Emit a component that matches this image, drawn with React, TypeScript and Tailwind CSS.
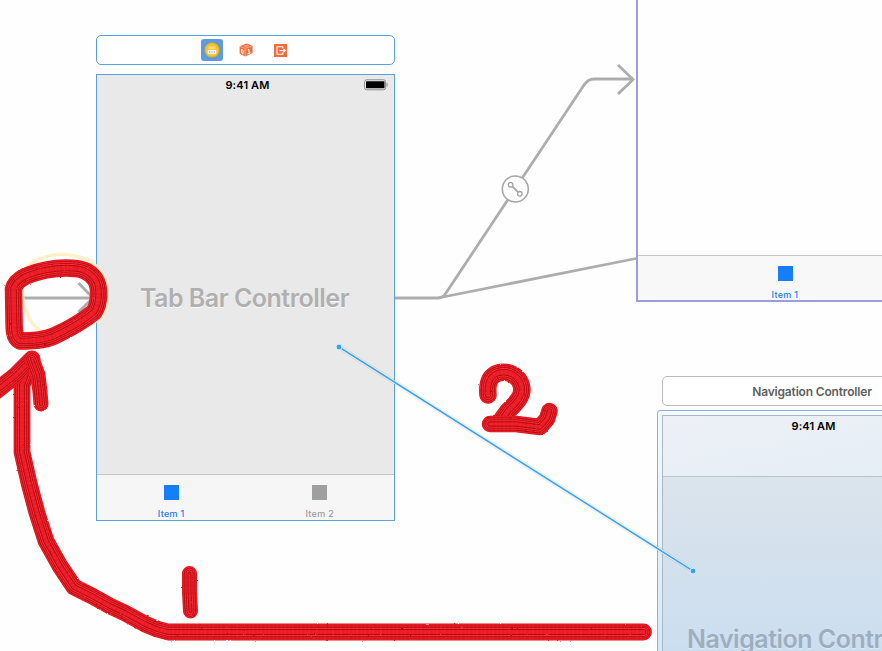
import React from "react";

const LOOP =
  "M14 318 L13.5 289 C14.5 284 18 280 26 276 C36 272 50 268 66 268 C82 268 89 271 95 279 C100 286 100 303 94 312 L86 318 C79 323 67 330 54 336 C43 341 30 341 20 341 C14 338 14 330 14 318 Z";

type BrushProps = { d: string; width?: number };

// A bristle brush: nested strokes along one path leave parallel light and dark streaks.
function Brush({ d, width = 17 }: BrushProps) {
  const bristles = [
    { w: width, c: "#e0141d" },
    { w: width - 1.4, c: "#ee222b" },
    { w: width - 3.6, c: "#b90610" },
    { w: width - 5.2, c: "#f22a33" },
    { w: width - 7.4, c: "#bb0711" },
    { w: width - 9, c: "#f4343e" },
    { w: width - 11, c: "#b80710" },
    { w: width - 12.8, c: "#ee2029" },
  ];
  return (
    <g fill="none" strokeLinejoin="round" strokeLinecap="round">
      {bristles.map((b, i) => (
        <path key={i} d={d} stroke={b.c} strokeWidth={Math.max(b.w, 0.8)} />
      ))}
      <path d={d} stroke="#b0000a" strokeOpacity=".1" strokeWidth={width - 2} strokeDasharray="1 2 2 3" strokeLinecap="butt" />
    </g>
  );
}

function TabItem({ label, active }: { label: string; active?: boolean }) {
  return (
    <div className="flex flex-1 flex-col items-center pt-[10px]">
      <div className={active ? "size-[15px] shrink-0 bg-[#147efb]" : "size-[15px] shrink-0 bg-[#9f9f9f]"} />
      <span className={`mt-[8px] text-[9px] leading-[12px] tracking-[0.3px] font-medium ${active ? "text-[#147efb]" : "text-[#9b9b9b]"}`}>
        {label}
      </span>
    </div>
  );
}

function SceneDock() {
  return (
    <div className="absolute left-[96px] top-[35px] flex h-[30px] w-[299px] items-center rounded-[5px] border border-[#5c9ede] bg-white pl-[104px]">
      <div className="flex size-[22px] items-center justify-center rounded-[3px] bg-[#5c9cdc]">
        <svg width="16" height="16" viewBox="0 0 16 16">
          <circle cx="8" cy="8" r="7.5" fill="#f6b11d" />
          <circle cx="8" cy="8" r="6.2" fill="#fbc834" />
          <rect x="4" y="3.8" width="8" height="4" rx=".6" fill="#fddc70" stroke="#f0ad18" strokeWidth=".6" />
          <rect x="3.8" y="8" width="8.4" height="3.8" rx=".5" fill="#fff" />
          <path d="M5 10h1.2M7.4 10h1.2M9.8 10h1.2" stroke="#5280a0" strokeWidth="1.1" />
        </svg>
      </div>
      <svg className="ml-[16px]" width="14" height="14" viewBox="0 0 14 14">
        <path d="M.6 3.2 7.5 .5 13.5 2.8V10L6.3 13.6.6 10.8Z" fill="#f46b3b" />
        <path d="M.7 3.6 6.2 5.3 13.4 3M6.2 5.3V13.5" fill="none" stroke="#fff" strokeOpacity=".75" strokeWidth=".6" />
        <path d="m4 2.9 3.5-1.2 3 1.1-3.6 1.2Z" fill="#f9a283" />
        <path d="M2.4 6.5v3.4l1.8.6V7.2ZM8.7 7l1.3-.6v4.2M8.5 11.1l2.9-1.2" fill="none" stroke="#fff" strokeWidth="1" />
      </svg>
      <svg className="ml-[21px]" width="13" height="13" viewBox="0 0 13 13">
        <rect width="13" height="13" fill="#f46b3b" />
        <path d="M8.8 4.4V2.8H3v7.5h5.8V8.6M5.5 6.6H11M9.4 4.8l1.9 1.8-1.9 1.8" fill="none" stroke="#fff" strokeWidth="1.1" />
      </svg>
    </div>
  );
}

function Battery() {
  return (
    <svg className="absolute right-[6px] top-[4px]" width="24" height="12" viewBox="0 0 24 12">
      <rect x=".6" y=".8" width="21" height="10" rx="2" fill="#f2f2f2" stroke="#8b8b8b" />
      <rect x="2" y="2.3" width="18.5" height="7" rx=".5" fill="#000" />
      <path d="M23 4v3.6" stroke="#999" strokeWidth="1.2" />
    </svg>
  );
}

export default function App() {
  return (
    <div className="relative h-[651px] w-[882px] overflow-hidden bg-[#fefefe] font-['Inter','Liberation_Sans',sans-serif]">
      <SceneDock />

      <section className="absolute left-[96px] top-[74px] flex h-[447px] w-[299px] flex-col border border-[#5c9ede] bg-[#e9e9e9]">
        <div className="relative h-[20px] text-center text-[11px] leading-[20px] font-semibold tracking-[0.15px] pl-[4px] text-black">
          9:41 AM
          <Battery />
        </div>
        <div className="flex flex-1 justify-center pt-[187px] pr-[2px]">
          <h1 className="whitespace-nowrap text-[25px] leading-[32px] font-semibold tracking-[-0.5px] text-[#b0b0b0] [text-shadow:0_1px_0_#f8f8f8]">
            Tab Bar Controller
          </h1>
        </div>
        <div className="flex h-[46px] border-t border-[#c5c5c5] bg-[#f6f6f6]">
          <TabItem label="Item 1" active />
          <TabItem label="Item 2" />
        </div>
      </section>

      <section className="absolute left-[636px] top-[-10px] flex h-[312px] w-[298px] flex-col justify-end border-2 border-[#9c9de0] bg-[#fefefe]">
        <div className="flex h-[45px] border-t border-[#c8c8c8] bg-[#f8f8f8]">
          <TabItem label="Item 1" active />
        </div>
      </section>

      <div className="absolute left-[662px] top-[376px] h-[30px] w-[300px] rounded-[5px] border border-[#bbb] bg-white text-center text-[12px] leading-[29px] font-semibold tracking-[-0.17px] text-[#606060]">
        Navigation Controller
      </div>
      <section className="absolute left-[657px] top-[410px] h-[520px] w-[310px] rounded-t-[3px] border border-[#8daee0] bg-gradient-to-b from-[#f5f9fc] to-[#d5e8f8] to-[240px] p-[4px]">
        <div className="h-full border border-[#a9b8c5] bg-gradient-to-b from-[#dbe4eb] from-[60px] to-[#cbdef0] to-[236px]">
          <div className="h-[61px] border-b border-[#b9c5ce] bg-gradient-to-br from-[#edf1f6] to-[#e4edf6] text-center text-[11px] leading-[20px] font-semibold tracking-[0.1px] pl-[3px] text-black">
            9:41 AM
          </div>
          <h2 className="pt-[146px] pl-[24px] whitespace-nowrap text-[25px] leading-[32px] font-semibold tracking-[-0.5px] text-[#9dafbf] [text-shadow:0_1px_0_#dfebf5]">
            Navigation Controller
          </h2>
        </div>
      </section>

      <svg className="pointer-events-none absolute inset-0" width="882" height="651" viewBox="0 0 882 651">
        <defs>
          <filter id="bristle" filterUnits="userSpaceOnUse" x="0" y="0" width="882" height="651">
            <feTurbulence type="fractalNoise" baseFrequency=".3" numOctaves="2" seed="4" result="noise" />
            <feDisplacementMap in="SourceGraphic" in2="noise" scale="1.8" xChannelSelector="R" yChannelSelector="G" />
          </filter>
        </defs>
        <g fill="none" stroke="#adadad" strokeWidth="2.8">
          <path d="M395 298H438Q443 298 446 293L584 85Q588 79 594 79H633" />
          <path d="M438 298 636 258.5" />
          <path d="M618 65 633 79.5 618 94" />
          <path d="M20 298H93M78.5 283 93 298 78.5 312" />
        </g>
        <circle cx="515.3" cy="189" r="13" fill="#fefefe" stroke="#a8a8a8" strokeWidth="1.6" />
        <g fill="none" stroke="#a5a5a5" strokeWidth="1.3">
          <circle cx="510.6" cy="184.7" r="2.3" />
          <circle cx="519.8" cy="193.8" r="2.3" />
          <path d="m512.3 186.4 5.8 5.7" strokeWidth="1.8" />
        </g>

        <path d="M25 268C41 255 61 252 75 256C94 259 108 274 108 297C109 323 78 334 45 334C29 326 22 307 22 288" fill="none" stroke="#fff0c8" strokeWidth="3.5" />

        <path d="M339 347 693 571" stroke="#000" strokeOpacity=".07" strokeWidth="5" />
        <path d="M339 347 693 571" stroke="#f7fbff" strokeWidth="3" />
        <path d="M339 347 693 571" stroke="#3fa4f4" strokeWidth="1.6" />
        <g fill="#34a2fb" stroke="#f3f7fa" strokeWidth=".8">
          <circle cx="339" cy="347" r="2.9" />
          <circle cx="693" cy="571" r="2.9" />
        </g>

        <g filter="url(#bristle)">
          <Brush d="M643.5 632H168L157 629 145 624 125 613 110 606 92 596 74 587 60 566 46 541 37 513 29 483 22 452V385L31 362" width={16.8} />
          <Brush d="M32 359 15 376 -4 391" width={17} />
          <Brush d="M32 359 38 375 40 392 41 404" width={15} />
          <Brush d={LOOP} width={17.5} />
          <Brush d="M189.5 573.5V592L190.5 611" width={15} />
          <Brush d="M488 395C487 384 489 376 498 373C509 370 519 376 521.5 386C524 396 515 404 508 411L500 422" width={17.5} />
          <Brush d="M490 424H516L540 427 547 419 549.5 411" width={16.5} />
        </g>
      </svg>
    </div>
  );
}
